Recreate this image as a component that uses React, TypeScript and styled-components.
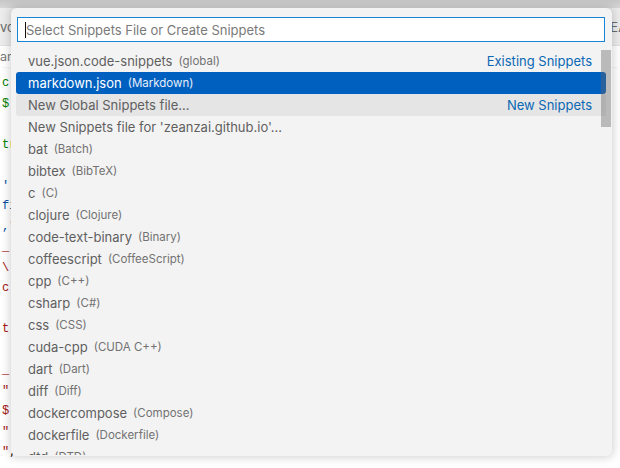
import React from "react";
import styled, { createGlobalStyle } from "styled-components";

const Global = createGlobalStyle`
  html, body { margin: 0; padding: 0; background: #ffffff; }
  body { font-family: "Inter", "Liberation Sans", sans-serif; }
`;

const Workbench = styled.div`
  position: relative;
  width: 620px;
  height: 468px;
  overflow: hidden;
  background: #ffffff;
  display: flex;
  flex-direction: column;
`;

const TitleBar = styled.div`
  height: 8px;
  flex: none;
  background: linear-gradient(#c6c6c6, #d6d6d6);
`;

const TabBar = styled.div`
  height: 37px;
  flex: none;
  display: flex;
  align-items: center;
  background: #ececec;
  border-bottom: 1px solid #e2e2e2;
  font-size: 13px;
  color: #6b6b6b;
  white-space: nowrap;
  overflow: hidden;
`;

const Tab = styled.div<{ $width?: number }>`
  flex: none;
  width: ${(p) => (p.$width ? `${p.$width}px` : "auto")};
  padding-left: ${(p) => (p.$width ? "0" : "12px")};
  overflow: hidden;
`;

const Breadcrumbs = styled.div`
  height: 21px;
  flex: none;
  display: flex;
  align-items: center;
  font-size: 12.5px;
  color: #777777;
  background: #ffffff;
  box-shadow: 0 2px 2px -2px rgba(0, 0, 0, 0.12);
  white-space: nowrap;
`;

const Editor = styled.div`
  flex: 1;
  padding: 6px 0 0 2px;
  font-family: "Liberation Mono", "DejaVu Sans Mono", monospace;
  font-size: 12px;
  line-height: 20.5px;
  white-space: pre;
`;

const CodeLine = styled.div`
  height: 20.5px;
  color: #000000;
`;

const Tok = styled.span<{ $c: string }>`
  color: ${(p) => p.$c};
`;

const Panel = styled.div`
  position: absolute;
  left: 11px;
  top: 8px;
  width: 601px;
  height: 448px;
  background: #f3f3f3;
  border-radius: 6px;
  box-shadow: 0 0 8px 2px rgba(0, 0, 0, 0.16);
  display: flex;
  flex-direction: column;
  overflow: hidden;
`;

const InputBox = styled.div`
  margin: 9px 7px 0 6px;
  height: 25px;
  box-sizing: border-box;
  border: 1px solid #1786d8;
  background: #ffffff;
  display: flex;
  align-items: center;
  padding-left: 7px;
  font-size: 13px;
  color: #7a7a7a;
`;

const Caret = styled.span`
  width: 1px;
  height: 16px;
  background: #111111;
  flex: none;
`;

const List = styled.div`
  position: relative;
  margin-top: 8px;
  height: 405px;
  overflow: hidden;
`;

const Row = styled.div<{ $state?: "selected" | "hover" }>`
  height: 22px;
  margin: 0 6px 0 5px;
  padding: 0 14px 0 12px;
  border-radius: 3px;
  display: flex;
  align-items: center;
  font-size: 13px;
  white-space: nowrap;
  color: ${(p) => (p.$state === "selected" ? "#ffffff" : "#5f5f5f")};
  background: ${(p) =>
    p.$state === "selected" ? "#0060c0" : p.$state === "hover" ? "#e5e5e5" : "transparent"};
`;

const Label = styled.span``;

const Desc = styled.span<{ $sel?: boolean }>`
  margin-left: 6px;
  font-size: 11.5px;
  color: ${(p) => (p.$sel ? "#e6eefa" : "#727272")};
`;

const Group = styled.span`
  margin-left: auto;
  color: #0a68b4;
  font-size: 13px;
`;

const ScrollThumb = styled.div`
  position: absolute;
  right: 1px;
  top: 0;
  width: 10px;
  height: 77px;
  background: rgba(100, 100, 100, 0.4);
`;

type Item = {
  label: string;
  desc?: string;
  group?: string;
  state?: "selected" | "hover";
};

const items: Item[] = [
  { label: "vue.json.code-snippets", desc: "global", group: "Existing Snippets" },
  { label: "markdown.json", desc: "Markdown", state: "selected" },
  { label: "New Global Snippets file...", group: "New Snippets", state: "hover" },
  { label: "New Snippets file for 'zeanzai.github.io'..." },
  { label: "bat", desc: "Batch" },
  { label: "bibtex", desc: "BibTeX" },
  { label: "c", desc: "C" },
  { label: "clojure", desc: "Clojure" },
  { label: "code-text-binary", desc: "Binary" },
  { label: "coffeescript", desc: "CoffeeScript" },
  { label: "cpp", desc: "C++" },
  { label: "csharp", desc: "C#" },
  { label: "css", desc: "CSS" },
  { label: "cuda-cpp", desc: "CUDA C++" },
  { label: "dart", desc: "Dart" },
  { label: "diff", desc: "Diff" },
  { label: "dockercompose", desc: "Compose" },
  { label: "dockerfile", desc: "Dockerfile" },
  { label: "dtd", desc: "DTD" },
];

const G = "#008000";
const B = "#0451a5";
const R = "#a31515";
const K = "#000000";

const code: [string, string][][] = [
  [["c", G]],
  [["$", G]],
  [],
  [["tr", G]],
  [],
  [["'", B]],
  [["fi", B]],
  [[',"', B]],
  [["_", R]],
  [["\\", R]],
  [["c", R]],
  [],
  [["t", R]],
  [],
  [["_", R]],
  [['"', R]],
  [["$", R]],
  [['"', R]],
  [['"', R], [",", K]],
];

export default function App() {
  return (
    <>
      <Global />
      <Workbench>
        <TitleBar />
        <TabBar>
          <Tab $width={590}>vo</Tab>
          <Tab>README.md</Tab>
        </TabBar>
        <Breadcrumbs>ar</Breadcrumbs>
        <Editor>
          {code.map((line, i) => (
            <CodeLine key={i}>
              {line.map(([t, c], j) => (
                <Tok key={j} $c={c}>
                  {t}
                </Tok>
              ))}
            </CodeLine>
          ))}
        </Editor>
        <Panel>
          <InputBox>
            <Caret />
            <span>Select Snippets File or Create Snippets</span>
          </InputBox>
          <List>
            {items.map((it, i) => (
              <Row key={i} $state={it.state}>
                <Label>{it.label}</Label>
                {it.desc && <Desc $sel={it.state === "selected"}>({it.desc})</Desc>}
                {it.group && <Group>{it.group}</Group>}
              </Row>
            ))}
            <ScrollThumb />
          </List>
        </Panel>
      </Workbench>
    </>
  );
}
